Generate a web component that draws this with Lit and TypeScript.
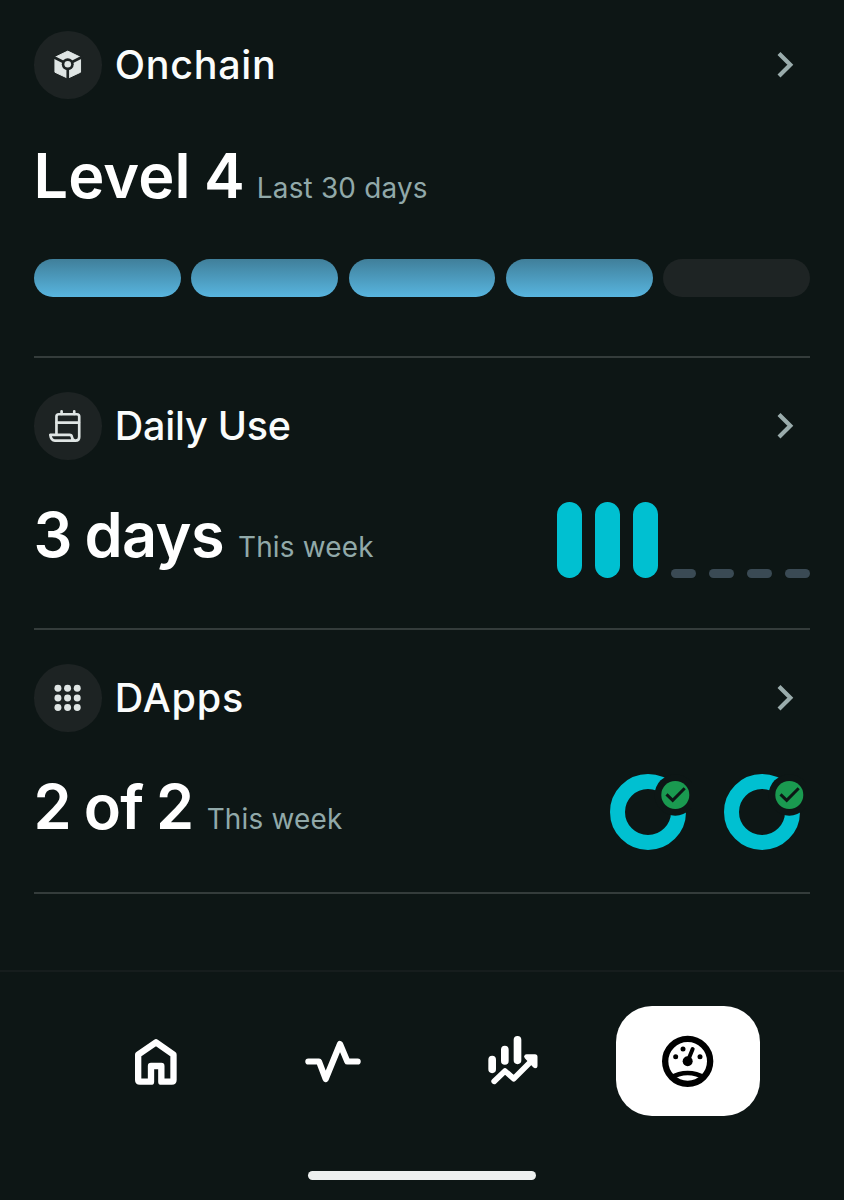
import { LitElement, html, css, svg, type TemplateResult } from "lit";
import { customElement, property } from "lit/decorators.js";

const cubeIcon = svg`<svg viewBox="41 33 203 203">
  <path fill="#dfe5e4" stroke="#dfe5e4" stroke-width="3" stroke-linejoin="round" d="M142.500 93.500 181 112V157L142.500 175 104 157V112Z"/>
  <path stroke="#1d2323" stroke-width="8" d="M98 110.500 142.500 133 187 110.500M142.500 132V180" fill="none"/>
  <circle cx="142.500" cy="133" r="18" fill="#1d2323"/>
  <circle cx="142.500" cy="133" r="10" fill="#dfe5e4"/>
</svg>`;

const calendarIcon = svg`<svg viewBox="41 35 203 203">
  <g fill="none" stroke="#dfe5e4" stroke-width="8" stroke-linecap="round" stroke-linejoin="round">
    <path d="M108.500 163V109q0-7 7-7h54.500q7 0 7 7V170q0 11-11 11H104q-12 0-14-17H148q6 0 7 6 1 11 10 11"/>
    <path d="M109 127H176M124 93V101M162 93V101"/>
  </g>
</svg>`;

const gridIcon = svg`<svg viewBox="41 41 203 203" fill="#dfe5e4">
  ${[114, 143, 172].map((cy) => [113, 142, 171].map((cx) => svg`<circle cx=${cx} cy=${cy} r="10.500"/>`))}
</svg>`;

const homeIcon = svg`<svg viewBox="18 33 180 180"><path fill="none" stroke="#fff" stroke-width="19" stroke-linejoin="round"
  d="M108 67 160.500 104V180q0 5-5 5H124V138H93V185H59.500q-5 0-5-5V104Z"/></svg>`;

const pulseIcon = svg`<svg viewBox="550 33 180 180"><path fill="none" stroke="#fff" stroke-width="18.500" stroke-linecap="round" stroke-linejoin="round"
  d="M566 124.500H598L618 177 661 72 683 124.500H714"/></svg>`;

const chartIcon = svg`<svg viewBox="32 93 180 180">
  <g fill="none" stroke="#fff" stroke-linecap="round" stroke-linejoin="round">
    <path stroke-width="23" d="M65.500 179V208M103.500 149V183M141.500 119.500V181"/>
    <path stroke-width="17" d="M71.500 244 104 213 130 236 190 176"/>
    <path stroke-width="15" fill="#fff" d="M169 170H194V197Z"/>
  </g>
</svg>`;

const gaugeIcon = svg`<svg viewBox="564 93 180 180">
  <g fill="none" stroke="#000">
    <circle cx="653" cy="184" r="67.500" stroke-width="19"/>
    <path stroke-width="14" d="M600 234Q653 204 706 234"/>
    <path stroke-width="12" stroke-linecap="round" d="M653 184 668 147"/>
  </g>
  <circle cx="653" cy="184" r="15"/>
  <circle cx="617" cy="170" r="7.500"/><circle cx="639" cy="147" r="7.500"/><circle cx="690" cy="170" r="7.500"/>
</svg>`;

@customElement("stat-section")
class StatSection extends LitElement {
  @property() heading = "";
  @property() value = "";
  @property() period = "";
  @property({ attribute: false }) icon?: TemplateResult | ReturnType<typeof svg>;

  static styles = css`
    :host { display: block; box-sizing: border-box; border-bottom: 2px solid #343c3b; }
    .head { display: flex; align-items: center; height: 67.5px; }
    .disc { width: 67.5px; height: 67.5px; border-radius: 50%; background: #1d2323; }
    .disc svg { display: block; width: 100%; height: 100%; }
    .title { flex: 1; margin: 1px 0 0 13.3px; font-size: 39.5px; line-height: 68px; font-weight: 500; color: #fafcfc; white-space: nowrap; letter-spacing: var(--title-spacing, 0); }
    .chevron { width: 24px; height: 34px; margin-right: 12px; }
    .row { display: flex; justify-content: space-between; align-items: flex-start; height: 76px; margin-top: var(--row-offset, 42.5px); }
    .text { display: flex; align-items: baseline; white-space: nowrap; }
    .value { margin-left: -0.5px; font-size: 61.2px; line-height: 67px; font-weight: 600; color: #fff; letter-spacing: var(--value-spacing, 0); word-spacing: -2.2px; }
    .period { margin-left: var(--period-gap, 12px); font-size: 27.9px; line-height: 40px; color: #91a9a9; letter-spacing: 0.2px; }
  `;

  render() {
    return html`
      <div class="head">
        <div class="disc">${this.icon}</div>
        <h2 class="title">${this.heading}</h2>
        <svg class="chevron" viewBox="0 0 24 34"><path d="M5 5.400 16.300 16.700 5 28" fill="none" stroke="#9aacac" stroke-width="4.200"/></svg>
      </div>
      <div class="row">
        <div class="text"><span class="value">${this.value}</span><span class="period">${this.period}</span></div>
        <slot name="aside"></slot>
      </div>
      <slot></slot>`;
  }
}

@customElement("app-root")
class AppRoot extends LitElement {
  static styles = css`
    :host { display: flex; flex-direction: column; box-sizing: border-box; height: 1200px; background: #0d1615; font-family: Inter, "Liberation Sans", sans-serif; overflow: hidden; }
    main { flex: none; height: 970px; box-sizing: border-box; padding: 31px 34px 0; }
    .onchain { height: 327px; --title-spacing: 0.7px; --value-spacing: 0.1px; --period-gap: 12px; --row-offset: 44.5px; }
    .daily { height: 272px; padding-top: 34px; --title-spacing: -0.25px; --value-spacing: -0.6px; --period-gap: 14px; }
    .dapps { height: 264px; padding-top: 34px; --title-spacing: 0.8px; --value-spacing: -0.6px; --period-gap: 13px; }
    .levels { display: grid; grid-template-columns: repeat(5, 1fr); gap: 10.4px; margin-top: 40px; }
    .level { height: 38px; border-radius: 19px; background: #1e2424; }
    .level.on { background: linear-gradient(#407f9a, #58b5df); }
    .week { display: flex; align-items: flex-end; gap: 12.7px; height: 76px; }
    .day { width: 25.3px; height: 9px; border-radius: 4.5px; background: #3a4a54; }
    .day.on { height: 76px; border-radius: 12.65px; background: #00c0d1; }
    .rings { display: flex; gap: 32px; margin-right: 4.3px; }
    .ring { display: block; width: 82px; height: 76px; }
    nav { flex: none; height: 146px; box-sizing: border-box; display: grid; grid-template-columns: repeat(4, 1fr); justify-items: center; padding: 34px 67.3px 0; border-top: 2px solid #161d1d; }
    .tab { display: flex; align-items: center; justify-content: center; width: 143.5px; height: 110px; border: 0; padding: 0; border-radius: 36px; background: none; }
    .tab.active { background: #fff; }
    .tab svg { width: 60px; height: 60px; }
    .indicator { width: 228px; height: 9px; margin: 55px auto 0; border-radius: 4.5px; background: #edf0ef; }
  `;

  render() {
    return html`
      <main>
        <stat-section class="onchain" heading="Onchain" value="Level 4" period="Last 30 days" .icon=${cubeIcon}>
          <div class="levels">${[1, 2, 3, 4, 5].map((n) => html`<div class="level ${n <= 4 ? "on" : ""}"></div>`)}</div>
        </stat-section>
        <stat-section class="daily" heading="Daily Use" value="3 days" period="This week" .icon=${calendarIcon}>
          <div slot="aside" class="week">${[1, 2, 3, 4, 5, 6, 7].map((n) => html`<div class="day ${n <= 3 ? "on" : ""}"></div>`)}</div>
        </stat-section>
        <stat-section class="dapps" heading="DApps" value="2 of 2" period="This week" .icon=${gridIcon}>
          <div slot="aside" class="rings">${[1, 2].map(() => html`
            <svg class="ring" viewBox="0 0 82 76">
              <circle cx="38" cy="38" r="30.500" fill="none" stroke="#00c0d1" stroke-width="15"/>
              <circle cx="65.300" cy="21" r="20.700" fill="#0d1615"/>
              <circle cx="65.300" cy="21" r="14" fill="#1a9a50"/>
              <path d="M56.500 20.300 62.700 26.300 74.700 14.300" fill="none" stroke="#0d1615" stroke-width="3"/>
            </svg>`)}</div>
        </stat-section>
      </main>
      <nav>
        <button class="tab" aria-label="Home">${homeIcon}</button>
        <button class="tab" aria-label="Activity">${pulseIcon}</button>
        <button class="tab" aria-label="Trends">${chartIcon}</button>
        <button class="tab active" aria-label="Dashboard">${gaugeIcon}</button>
      </nav>
      <div class="indicator"></div>`;
  }
}
